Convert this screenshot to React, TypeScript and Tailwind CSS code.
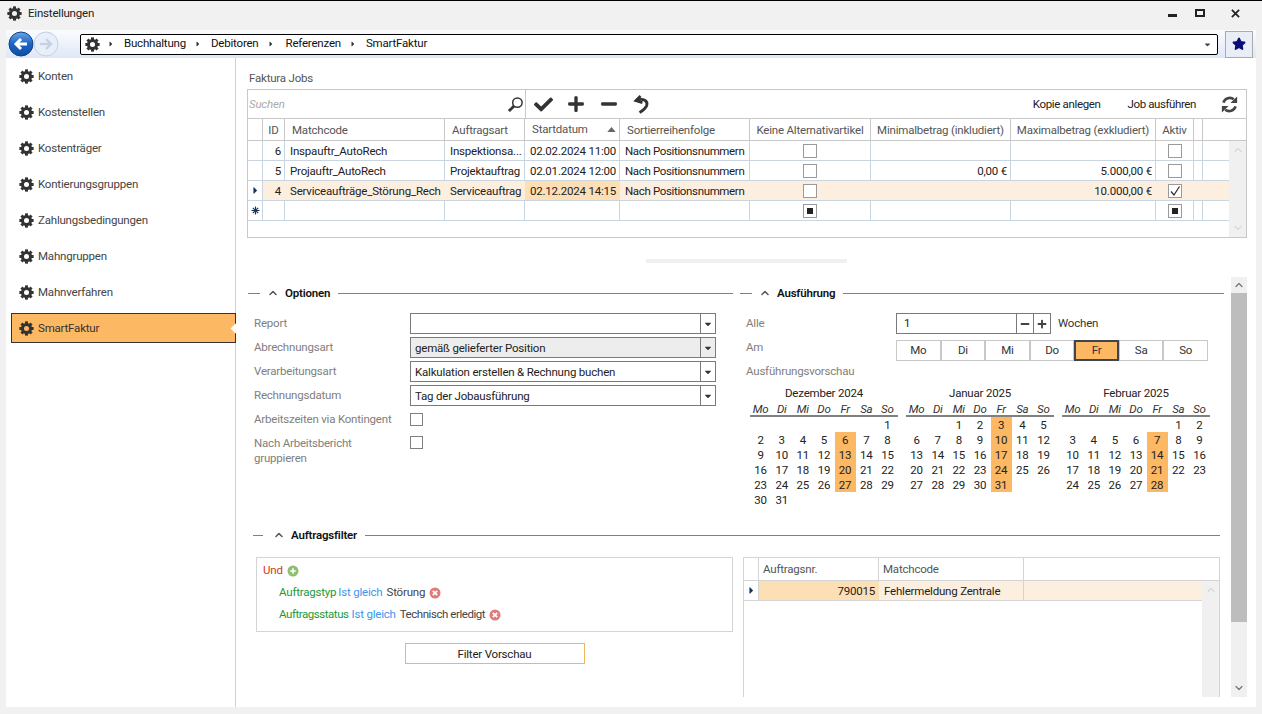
import { ChevronDown, ChevronUp, Star } from "lucide-react";
import { FaCheck, FaPlus, FaMinus, FaCaretRight, FaCaretDown } from "react-icons/fa";

const navItems = [
  "Konten",
  "Kostenstellen",
  "Kostenträger",
  "Kontierungsgruppen",
  "Zahlungsbedingungen",
  "Mahngruppen",
  "Mahnverfahren",
  "SmartFaktur",
];

const weekDays = ["Mo", "Di", "Mi", "Do", "Fr", "Sa", "So"];

const months = [
  { title: "Dezember 2024", blanks: 6, days: 31, hits: [6, 13, 20, 27] },
  { title: "Januar 2025", blanks: 2, days: 31, hits: [3, 10, 17, 24, 31] },
  { title: "Februar 2025", blanks: 5, days: 28, hits: [7, 14, 21, 28] },
];

const jobCols = "grid grid-cols-[15px_22px_160px_80px_95px_130px_121px_140px_145px_38px_9px_1fr]";
const cell = "border-r pl-[5px] pr-[3px] whitespace-nowrap overflow-hidden leading-[21px]";
const head = "border-r border-[#c8c8c8] whitespace-nowrap overflow-hidden leading-[23px]";

// gear used all over the settings tree, 8 square teeth around a ring
function Gear() {
  return (
    <svg viewBox="0 0 16 16" className="w-[15px] h-[15px] shrink-0">
      <circle cx="8" cy="8" r="4.3" fill="none" stroke="#333" strokeWidth="3.2" />
      {[0, 45, 90, 135, 180, 225, 270, 315].map((a) => (
        <rect key={a} x="6.4" y="0.4" width="3.2" height="3" fill="#333" transform={`rotate(${a} 8 8)`} />
      ))}
    </svg>
  );
}

function Check({ state }: { state: "off" | "on" | "mixed" }) {
  return (
    <div className="w-[14px] h-[14px] border border-[#9a9a9a] bg-white flex items-center justify-center">
      {state === "mixed" && <div className="w-[6px] h-[6px] bg-[#222]" />}
      {state === "on" && (
        <svg viewBox="0 0 12 12" className="w-[12px] h-[12px]">
          <path d="M2 6.5 L5 10 L10.5 1.5" fill="none" stroke="#333" strokeWidth="1.3" />
        </svg>
      )}
    </div>
  );
}

function JobRow(props: {
  marker?: "row" | "new";
  id?: string;
  code?: string;
  art?: string;
  date?: string;
  sort?: string;
  alt: "off" | "mixed";
  min?: string;
  max?: string;
  active: "off" | "on" | "mixed";
  selected?: boolean;
}) {
  const line = props.selected ? "border-transparent" : "border-[#c9d5e0]";
  return (
    <div className={`${jobCols} h-[20px] border-b border-[#c9d5e0] text-[#222] ${props.selected ? "bg-[#fdefe0]" : ""}`}>
      <div className="border-r border-[#c9d5e0] bg-white flex items-center justify-center">
        {props.marker === "row" && <FaCaretRight className="w-[11px] h-[11px] text-[#17365d]" />}
        {props.marker === "new" && (
          <svg viewBox="0 0 10 10" className="w-[9px] h-[9px]">
            <path d="M5 0.5 V9.5 M0.5 5 H9.5 M2 2 L8 8 M8 2 L2 8" stroke="#17365d" strokeWidth="1.3" />
          </svg>
        )}
      </div>
      <div className={`${cell} ${line} text-right`}>{props.id}</div>
      <div className={`${cell} ${line}`}>{props.code}</div>
      <div className={`${cell} ${line}`}>{props.art}</div>
      <div className={`${cell} ${line} ${props.selected ? "bg-[#fddfb5]" : ""}`}>{props.date}</div>
      <div className={`${cell} ${line} tracking-[-0.35px]`}>{props.sort}</div>
      <div className={`border-r ${line} flex items-center justify-center`}>
        <Check state={props.alt} />
      </div>
      <div className={`${cell} ${line} text-right`}>{props.min}</div>
      <div className={`${cell} ${line} text-right`}>{props.max}</div>
      <div className={`border-r ${line} flex items-center justify-center`}>
        <Check state={props.active} />
      </div>
      <div className={`border-r ${line}`} />
      <div />
    </div>
  );
}

function SectionTitle({ title, dash, gap }: { title: string; dash: string; gap: string }) {
  return (
    <div className="flex items-center h-[18px]">
      <div className={`${dash} h-px bg-[#808080]`} />
      <ChevronUp className={`w-[12px] h-[12px] text-[#555] ${gap}`} strokeWidth={3} />
      <span className="ml-[6px] mr-[8px] pt-[2px] font-semibold text-[#111]">{title}</span>
      <div className="flex-1 h-px bg-[#808080]" />
    </div>
  );
}

function Combo({ value, disabled }: { value?: string; disabled?: boolean }) {
  return (
    <div className={`w-[306px] h-[21px] border border-[#7a7a7a] flex items-center text-[#222] ${disabled ? "bg-[#ededed]" : "bg-white"}`}>
      <div className="flex-1 px-[4px] pt-[2px] truncate">{value}</div>
      <div className="w-[15px] h-full border-l border-[#7a7a7a] flex items-center justify-center">
        <FaCaretDown className="w-[10px] h-[10px] text-[#333]" />
      </div>
    </div>
  );
}

function FormRow({ label, children }: { label: string; children?: React.ReactNode }) {
  return (
    <div className="flex items-center h-[21px]">
      <div className="w-[156px] text-[#808080] truncate">{label}</div>
      {children}
    </div>
  );
}

function RoundBadge({ kind }: { kind: "add" | "remove" }) {
  return (
    <svg viewBox="0 0 12 12" className="w-[12px] h-[12px] ml-[4px] shrink-0">
      <circle cx="6" cy="6" r="5.5" fill={kind === "add" ? "#8fbf72" : "#e27a7a"} />
      {kind === "add" ? (
        <path d="M6 3.2 V8.8 M3.2 6 H8.8" stroke="#fff" strokeWidth="1.6" />
      ) : (
        <path d="M3.8 3.8 L8.2 8.2 M8.2 3.8 L3.8 8.2" stroke="#fff" strokeWidth="1.8" />
      )}
    </svg>
  );
}

function Month({ title, blanks, days, hits }: (typeof months)[number]) {
  return (
    <div className="w-[148px]">
      <div className="h-[15px] leading-[15px] text-center text-[#222]">{title}</div>
      <div className="grid grid-cols-7 h-[16px] border-b-2 border-[#808080] italic text-[#333] leading-[17px] text-center">
        {weekDays.map((d) => (
          <div key={d}>{d}</div>
        ))}
      </div>
      <div className="grid grid-cols-7 text-center text-[#222] leading-[17px]">
        {Array.from({ length: blanks }).map((_, i) => (
          <div key={i} />
        ))}
        {Array.from({ length: days }).map((_, i) => (
          <div key={i} className={`h-[15px] ${hits.includes(i + 1) ? "bg-[#fdb863]" : ""}`}>
            {i + 1}
          </div>
        ))}
      </div>
    </div>
  );
}

export default function App() {
  return (
    <div className="w-[1262px] h-[714px] overflow-hidden bg-[#f1f1f1] border-t border-black flex flex-col text-[11.5px] tracking-[-0.2px] font-['Roboto',sans-serif]">
      {/* Title bar */}
      <div className="h-[29px] flex items-center pl-[7px] pb-[5px] text-[#222]">
        <Gear />
        <span className="ml-[6px] pt-[2px]">Einstellungen</span>
        <div className="ml-auto flex items-center text-[#111]">
          <div className="w-[9px] h-[3px] bg-[#222] mt-[5px]" />
          <div className="w-[10px] h-[8px] border-2 border-[#222] ml-[18px]" />
          <svg viewBox="0 0 10 10" className="w-[9px] h-[9px] ml-[26px] mr-[22px]">
            <path d="M1 1 L9 9 M9 1 L1 9" stroke="#222" strokeWidth="2" />
          </svg>
        </div>
      </div>

      <div className="mx-[6px] flex-1 min-h-0 mb-[7px] flex flex-col bg-white">
        {/* Navigation bar */}
        <div className="h-[28px] flex items-center bg-linear-to-b from-[#fbfcfe] to-[#dfe7f7]">
          <svg viewBox="0 0 26 26" className="w-[26px] h-[26px] ml-[2px] shrink-0">
            <defs>
              <linearGradient id="backFill" x1="0" y1="0" x2="0" y2="1">
                <stop offset="0" stopColor="#6aa6e8" />
                <stop offset="0.5" stopColor="#1c63c4" />
                <stop offset="1" stopColor="#0d4fa8" />
              </linearGradient>
            </defs>
            <circle cx="13" cy="13" r="12" fill="url(#backFill)" stroke="#12417f" />
            <path d="M19 13 H9 M13 8 L8 13 L13 18" fill="none" stroke="#fff" strokeWidth="3" />
          </svg>
          <svg viewBox="0 0 26 26" className="w-[26px] h-[26px] ml-[-1px] shrink-0">
            <circle cx="13" cy="13" r="12" fill="#e9eff9" stroke="#c3cfe2" />
            <path d="M7 13 H17 M13 8 L18 13 L13 18" fill="none" stroke="#c6d2e4" strokeWidth="2.4" />
          </svg>
          <div className="ml-[21px] w-[1138px] h-[21px] bg-white border border-black rounded-[2px] flex items-center pl-[4px] text-[#111]">
            <Gear />
            <FaCaretRight className="w-[8px] h-[8px] text-[#333] ml-[7px]" />
            <span className="ml-[9px]">Buchhaltung</span>
            <FaCaretRight className="w-[8px] h-[8px] text-[#333] ml-[8px]" />
            <span className="ml-[9px]">Debitoren</span>
            <FaCaretRight className="w-[8px] h-[8px] text-[#333] ml-[8px]" />
            <span className="ml-[11px]">Referenzen</span>
            <FaCaretRight className="w-[8px] h-[8px] text-[#333] ml-[8px]" />
            <span className="ml-[9px]">SmartFaktur</span>
            <FaCaretDown className="w-[9px] h-[9px] text-[#444] ml-auto mr-[5px]" />
          </div>
          <div className="ml-[7px] w-[28px] h-[27px] bg-[#e8edf6] border border-[#aaa] flex items-center justify-center">
            <Star className="w-[14px] h-[14px] text-[#0a0a78]" fill="#0a0a78" />
          </div>
        </div>

        <div className="flex flex-1 min-h-0">
          {/* Sidebar */}
          <div className="w-[230px] border-r border-[#d0d0d0] pt-[3px] flex flex-col gap-[6px] shrink-0">
            {navItems.map((item) =>
              item === "SmartFaktur" ? (
                <div key={item} className="relative ml-[5px] mr-[-1px] h-[30px] border border-[#333] bg-[#fdb863] flex items-center pl-[7px] text-[#333]">
                  <Gear />
                  <span className="ml-[4px] pt-[2px]">{item}</span>
                  <div className="absolute right-[-4px] top-[11px] w-[7px] h-[7px] rotate-45 bg-white" />
                </div>
              ) : (
                <div key={item} className="ml-[5px] h-[30px] flex items-center pl-[8px] text-[#444]">
                  <Gear />
                  <span className="ml-[4px] pt-[2px]">{item}</span>
                </div>
              )
            )}
          </div>

          {/* Main */}
          <div className="flex-1 pl-[11px] pr-[9px] min-w-0">
            <div className="mt-[11px] mb-[2px] h-[18px] leading-[19px] text-[#555] pl-[2px]">Faktura Jobs</div>

            <div className="h-[149px] border border-[#c8c8c8] flex flex-col">
              <div className="h-[29px] border-b border-[#c8c8c8] flex items-center">
                <div className="w-[278px] h-full border-r border-[#c8c8c8] flex items-center pl-[1px] pr-[1px]">
                  <span className="italic text-[#aaa] pt-[2px]">Suchen</span>
                  <svg viewBox="0 0 18 18" className="w-[17px] h-[17px] ml-auto">
                    <circle cx="11" cy="7" r="5" fill="none" stroke="#333" strokeWidth="1.6" />
                    <path d="M7.5 10.5 L2 16" stroke="#333" strokeWidth="3" />
                  </svg>
                </div>
                <FaCheck className="w-[19px] h-[19px] ml-[8px] text-[#333]" />
                <FaPlus className="w-[18px] h-[18px] ml-[14px] text-[#333]" />
                <FaMinus className="w-[18px] h-[18px] ml-[15px] text-[#333]" />
                <svg viewBox="0 0 20 20" className="w-[19px] h-[19px] ml-[14px]">
                  <path d="M9 1 L4 6 L11 8" fill="none" stroke="#333" strokeWidth="2.8" />
                  <path d="M5 5.5 C12 3 17 6 15.5 11 C14.5 14 11 16.5 8 18.5" fill="none" stroke="#333" strokeWidth="3" />
                </svg>
                <span className="ml-auto pt-[2px] text-[#222] tracking-[-0.35px]">Kopie anlegen</span>
                <span className="ml-[27px] pt-[2px] text-[#222] tracking-[-0.4px]">Job ausführen</span>
                <svg viewBox="0 0 20 20" className="w-[19px] h-[19px] ml-[24px] mr-[7px]">
                  <path d="M3.6 8 A7 7 0 0 1 14.5 4.5" fill="none" stroke="#444" strokeWidth="2.8" />
                  <path d="M18 1.5 V8.5 H11 Z" fill="#444" />
                  <path d="M16.4 12 A7 7 0 0 1 5.5 15.5" fill="none" stroke="#444" strokeWidth="2.8" />
                  <path d="M2 18.5 V11.5 H9 Z" fill="#444" />
                </svg>
              </div>

              <div className={`${jobCols} h-[22px] border-b border-[#c8c8c8] text-[#555]`}>
                <div className="border-r border-[#c8c8c8]" />
                <div className={`${head} text-center`}>ID</div>
                <div className={`${head} pl-[7px]`}>Matchcode</div>
                <div className={`${head} pl-[7px]`}>Auftragsart</div>
                <div className={`${head} pl-[7px] flex items-center justify-between pr-[3px]`}>
                  Startdatum
                  <svg viewBox="0 0 10 6" className="w-[9px] h-[5px]">
                    <path d="M0 6 L5 0 L10 6 Z" fill="#666" />
                  </svg>
                </div>
                <div className={`${head} pl-[7px]`}>Sortierreihenfolge</div>
                <div className={`${head} text-center`}>Keine Alternativartikel</div>
                <div className={`${head} text-center`}>Minimalbetrag (inkludiert)</div>
                <div className={`${head} text-center`}>Maximalbetrag (exkludiert)</div>
                <div className={`${head} text-center`}>Aktiv</div>
                <div className="border-r border-[#c8c8c8]" />
                <div />
              </div>

              <div className="flex flex-1 min-h-0">
                <div className="flex-1 min-w-0">
                  <JobRow id="6" code="Inspauftr_AutoRech" art="Inspektionsa..." date="02.02.2024 11:00" sort="Nach Positionsnummern" alt="off" active="off" />
                  <JobRow id="5" code="Projauftr_AutoRech" art="Projektauftrag" date="02.01.2024 12:00" sort="Nach Positionsnummern" alt="off" min="0,00 €" max="5.000,00 €" active="off" />
                  <JobRow marker="row" selected id="4" code="Serviceaufträge_Störung_Rech" art="Serviceauftrag" date="02.12.2024 14:15" sort="Nach Positionsnummern" alt="off" max="10.000,00 €" active="on" />
                  <JobRow marker="new" alt="mixed" active="mixed" />
                </div>
                <div className="w-[17px] bg-[#f0f0f0] flex flex-col items-center justify-between py-[3px] text-[#c4c4c4]">
                  <ChevronUp className="w-[12px] h-[12px]" />
                  <ChevronDown className="w-[12px] h-[12px]" />
                </div>
              </div>
            </div>

            <div className="mt-[21px] ml-[399px] w-[201px] h-[4px] bg-[#f0f0f0]" />

            <div className="mt-[14px] h-[420px] flex">
              <div className="w-[983px] shrink-0">
                <div className="flex pt-[7px]">
                  {/* Optionen */}
                  <div className="w-[493px] shrink-0 pr-[7px]">
                    <SectionTitle title="Optionen" dash="ml-px w-[12px]" gap="ml-[7px]" />
                    <div className="mt-[11px] pl-[7px] flex flex-col gap-[3px]">
                      <FormRow label="Report"><Combo /></FormRow>
                      <FormRow label="Abrechnungsart"><Combo value="gemäß gelieferter Position" disabled /></FormRow>
                      <FormRow label="Verarbeitungsart"><Combo value="Kalkulation erstellen & Rechnung buchen" /></FormRow>
                      <FormRow label="Rechnungsdatum"><Combo value="Tag der Jobausführung" /></FormRow>
                      <FormRow label="Arbeitszeiten via Kontingent">
                        <div className="w-[13px] h-[13px] border border-[#808080]" />
                      </FormRow>
                      <div className="flex items-start pt-[3px]">
                        <div className="w-[156px] text-[#808080] leading-[15px]">Nach Arbeitsbericht<br />gruppieren</div>
                        <div className="w-[13px] h-[13px] border border-[#808080]" />
                      </div>
                    </div>
                  </div>

                  {/* Ausführung */}
                  <div className="flex-1 pr-[6px]">
                    <SectionTitle title="Ausführung" dash="w-[12px]" gap="ml-[7px]" />
                    <div className="mt-[11px] pl-[6px]">
                      <div className="flex items-center h-[21px]">
                        <div className="w-[150px] text-[#808080]">Alle</div>
                        <div className="w-[155px] h-[21px] border border-[#7a7a7a] flex items-center text-[#222]">
                          <div className="flex-1 pl-[7px]">1</div>
                          <div className="w-[17px] h-full border-l border-[#7a7a7a] flex items-center justify-center">
                            <FaMinus className="w-[10px] h-[10px] text-[#444]" />
                          </div>
                          <div className="w-[17px] h-full border-l border-[#7a7a7a] flex items-center justify-center">
                            <FaPlus className="w-[10px] h-[10px] text-[#444]" />
                          </div>
                        </div>
                        <span className="ml-[7px] text-[#333]">Wochen</span>
                      </div>
                      <div className="flex items-start mt-[3px] h-[24px]">
                        <div className="w-[150px] h-[21px] leading-[21px] text-[#808080]">Am</div>
                        <div className="mt-[3px] grid grid-cols-7 w-[312px] h-[21px] text-center text-[#333]">
                          {weekDays.map((d) => (
                            <div key={d} className={d === "Fr" ? "border-2 border-[#3d4550] bg-[#fdb863] leading-[17px]" : "border border-[#c8c8c8] leading-[19px]"}>
                              {d}
                            </div>
                          ))}
                        </div>
                      </div>
                      <div className="h-[21px] leading-[21px] text-[#808080]">Ausführungsvorschau</div>
                      <div className="mt-[4px] ml-[4px] flex gap-[8px]">
                        {months.map((m) => (
                          <Month key={m.title} {...m} />
                        ))}
                      </div>
                    </div>
                  </div>
                </div>

                {/* Auftragsfilter */}
                <div className="mt-[19px] pl-[6px] pr-[10px]">
                  <SectionTitle title="Auftragsfilter" dash="w-[10px]" gap="ml-[10px]" />
                </div>
                <div className="mt-[13px] pl-[9px] flex gap-[10px]">
                  <div className="w-[477px]">
                    <div className="h-[75px] border border-[#d4d4d4] pl-[6px] pt-[2px]">
                      <div className="h-[22px] flex items-center text-[#d03a12]">
                        Und <RoundBadge kind="add" />
                      </div>
                      <div className="h-[22px] flex items-center pl-[16px] text-[#444]">
                        <span className="text-[#1a9a3c]">Auftragstyp</span>
                        <span className="ml-[2px] text-[#3a96ee]">Ist gleich</span>
                        <span className="ml-[4px]">Störung</span>
                        <RoundBadge kind="remove" />
                      </div>
                      <div className="h-[22px] flex items-center pl-[16px] text-[#444]">
                        <span className="text-[#1a9a3c] tracking-[-0.45px]">Auftragsstatus</span>
                        <span className="ml-[3px] text-[#3a96ee]">Ist gleich</span>
                        <span className="ml-[4px] tracking-[-0.45px]">Technisch erledigt</span>
                        <RoundBadge kind="remove" />
                      </div>
                    </div>
                    <div className="mt-[11px] mx-auto w-[180px] h-[21px] border border-[#f0b560] flex items-center justify-center pt-[2px] text-[#222]">
                      Filter Vorschau
                    </div>
                  </div>

                  <div className="w-[477px] h-[140px] border-t border-x border-[#d4d4d4] flex flex-col">
                    <div className="h-[23px] flex border-b border-[#d4d4d4] text-[#555] leading-[22px]">
                      <div className="w-[15px] border-r border-[#d4d4d4]" />
                      <div className="w-[120px] border-r border-[#d4d4d4] pl-[4px]">Auftragsnr.</div>
                      <div className="w-[145px] border-r border-[#d4d4d4] pl-[4px]">Matchcode</div>
                    </div>
                    <div className="flex flex-1 min-h-0">
                      <div className="flex-1">
                        <div className="h-[20px] flex border-b border-[#d4d4d4] bg-[#fdefe0] text-[#222] leading-[20px]">
                          <div className="w-[15px] bg-white border-r border-[#d4d4d4] flex items-center justify-center">
                            <FaCaretRight className="w-[11px] h-[11px] text-[#17365d]" />
                          </div>
                          <div className="w-[120px] bg-[#fddfb5] pr-[4px] text-right">790015</div>
                          <div className="w-[145px] border-r border-[#d4d4d4] pl-[5px]">Fehlermeldung Zentrale</div>
                        </div>
                      </div>
                      <div className="w-[17px] bg-[#f0f0f0] pt-[3px] flex justify-center text-[#c4c4c4]">
                        <ChevronUp className="w-[12px] h-[12px]" />
                      </div>
                    </div>
                  </div>
                </div>
              </div>

              {/* Page scrollbar */}
              <div className="w-[17px] ml-px bg-[#f0f0f0] flex flex-col">
                <div className="h-[16px] flex items-center justify-center text-[#777]">
                  <ChevronUp className="w-[12px] h-[12px]" strokeWidth={2.5} />
                </div>
                <div className="h-[329px] bg-[#bdbdbd]" />
                <div className="flex-1 flex items-end justify-center pb-[3px] text-[#777]">
                  <ChevronDown className="w-[12px] h-[12px]" strokeWidth={2.5} />
                </div>
              </div>
            </div>
          </div>
        </div>
      </div>
    </div>
  );
}
